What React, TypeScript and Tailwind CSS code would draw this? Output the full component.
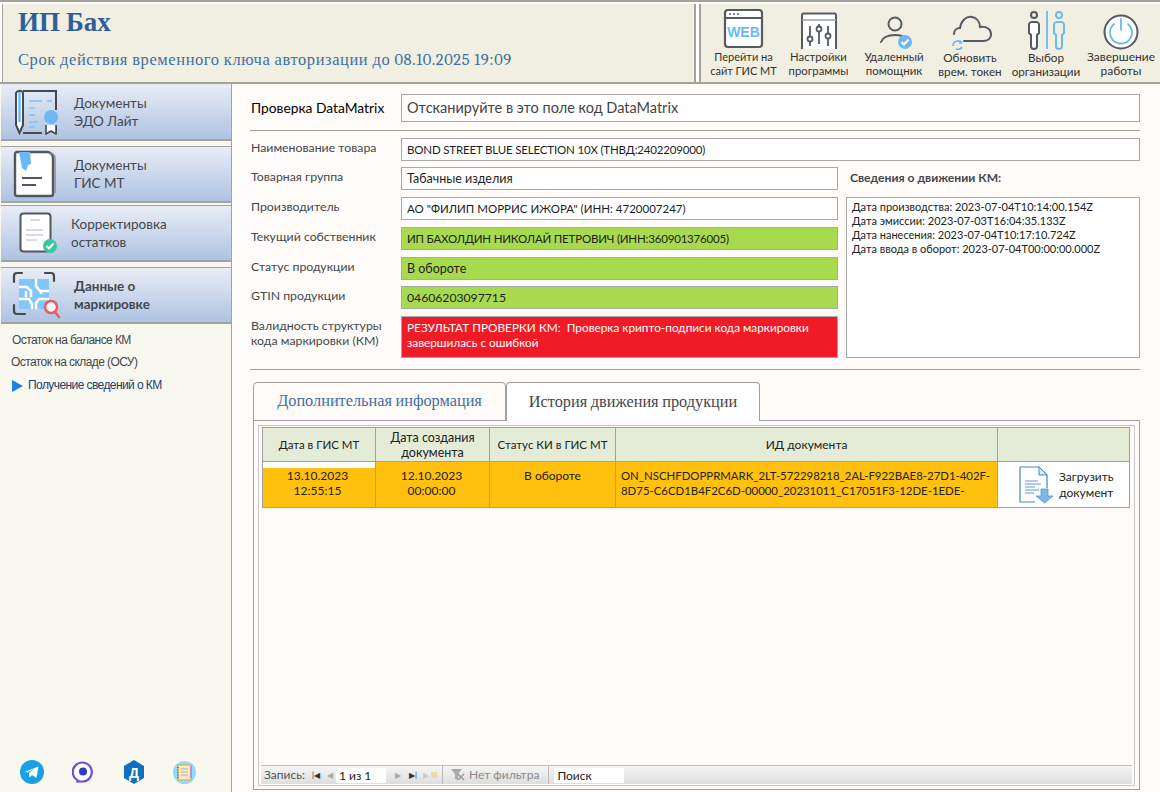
import type { ReactNode } from "react";

const serif = "font-['Cambria','Liberation_Serif',serif]";

function WebIcon() {
  return (
    <svg width="42" height="42" viewBox="0 0 42 42" fill="none">
      <rect x="2" y="2" width="37" height="37" rx="3" stroke="#555b63" strokeWidth="2.2" fill="#fff" />
      <path d="M2 10h37" stroke="#555b63" strokeWidth="2" />
      <path d="M6 6h2M10 6h2M14 6h2" stroke="#555b63" strokeWidth="1.5" />
      <text x="20.5" y="29" textAnchor="middle" fontFamily="Liberation Sans" fontWeight="700" fontSize="14" fill="#6cb8f6">WEB</text>
    </svg>
  );
}

function SlidersIcon() {
  return (
    <svg width="38" height="38" viewBox="0 0 38 38" fill="none" stroke="#555b63">
      <path d="M2 37V3a1.5 1.5 0 0 1 1.500-1.500h31A1.500 1.500 0 0 1 36 3v34" strokeWidth="2" fill="#fff" />
      <path d="M2 8h34" strokeWidth="1.500" stroke="#9aa0a6" />
      <path d="M10 14v20M19 12v20M28 14v20" strokeWidth="1.800" />
      <circle cx="10" cy="27" r="2.500" fill="#fff" strokeWidth="1.800" />
      <circle cx="19" cy="17" r="2.500" fill="#fff" strokeWidth="1.800" />
      <circle cx="28" cy="24" r="2.500" fill="#fff" strokeWidth="1.800" />
    </svg>
  );
}

function HelperIcon() {
  return (
    <svg className="ml-[6px]" width="36" height="34" viewBox="0 0 36 34" fill="none">
      <circle cx="16" cy="8" r="6.500" stroke="#555b63" strokeWidth="2" />
      <path d="M2 26c2-5 7-7 14-7 3 0 5 .4 7 1" stroke="#555b63" strokeWidth="2" strokeLinecap="round" />
      <circle cx="26" cy="26" r="7" fill="#6cb8f6" />
      <path d="M22.500 26l2.500 2.500 4.500-5" stroke="#fff" strokeWidth="2" />
    </svg>
  );
}

function CloudIcon() {
  return (
    <svg className="ml-[3px]" width="42" height="36" viewBox="0 0 42 36" fill="none">
      <path d="M3 20c0-4 3-6 6-6 1-7 6-12 12-11 5 1 8 5 8 10 6-1 11 2 11 7s-4 7-8 7H13" stroke="#555b63" strokeWidth="2" strokeLinecap="round" />
      <path d="M2 32a5 5 0 0 1 9-3M11 33a5 5 0 0 1-6 2" stroke="#6cb8f6" strokeWidth="1.600" />
      <path d="M9 26l3 3-4 1z" fill="#6cb8f6" />
    </svg>
  );
}

function OrgIcon() {
  return (
    <svg width="42" height="40" viewBox="0 0 42 40" fill="none">
      <circle cx="9" cy="5" r="3" stroke="#555b63" strokeWidth="2" />
      <path d="M4 14a3 3 0 0 1 3-2h4a3 3 0 0 1 3 2v9l-2 2v11a3 3 0 0 1-6 0V25l-2-2z" stroke="#555b63" strokeWidth="2" fill="#fff" />
      <path d="M22 1v38" stroke="#6cb8f6" strokeWidth="1.800" />
      <circle cx="34" cy="5" r="3" stroke="#6cb8f6" strokeWidth="2" />
      <path d="M29 14a3 3 0 0 1 3-2h4a3 3 0 0 1 3 2v9l-2 2v11a3 3 0 0 1-6 0V25l-2-2z" stroke="#6cb8f6" strokeWidth="2" />
    </svg>
  );
}

function PowerIcon() {
  return (
    <svg width="36" height="36" viewBox="0 0 36 36" fill="none">
      <circle cx="18" cy="18" r="16.500" stroke="#555b63" strokeWidth="2" fill="#fff" />
      <path d="M11 10a11 11 0 1 0 14 0" stroke="#6cb8f6" strokeWidth="1.800" strokeLinecap="round" />
      <path d="M18 5v11" stroke="#6cb8f6" strokeWidth="1.800" strokeLinecap="round" />
    </svg>
  );
}

function EdoIcon() {
  return (
    <svg width="46" height="46" viewBox="0 0 46 46" fill="none">
      <path d="M10 2h33v19M43 37v6h-2M10 44h19" stroke="#44494f" strokeWidth="2" />
      <path d="M3 4a3 3 0 0 1 3-2 3 3 0 0 1 4 2v32l-3.500 8L3 36z" stroke="#44494f" strokeWidth="2" fill="#fff" />
      <path d="M6.500 3v30" stroke="#6cb8f6" strokeWidth="2.500" />
      <path d="M16 12h13M34 12h5M16 19h6M16 26h6M16 33h9M16 38h6" stroke="#7cc4fb" strokeWidth="1.600" />
      <circle cx="38" cy="28" r="7" fill="#6cb8f6" />
      <path d="M33 36v9l5-3 5 3v-9" stroke="#44494f" strokeWidth="1.600" fill="#fff" />
    </svg>
  );
}

function GisIcon() {
  return (
    <svg width="44" height="48" viewBox="0 0 44 48" fill="none">
      <path d="M2 4a2 2 0 0 1 2-2h30a6 6 0 0 1 6 6v36a2 2 0 0 1-2 2H4a2 2 0 0 1-2-2z" stroke="#52575e" strokeWidth="2.400" fill="#fff" />
      <path d="M37 3a5 5 0 0 1 5 5v35" stroke="#8b9096" strokeWidth="1.500" />
      <path d="M6 2h11l1 12-3 1-2 6-4-3z" fill="#6cb8f6" />
      <path d="M9 28h20M9 35h14" stroke="#52575e" strokeWidth="2" />
    </svg>
  );
}

function StockIcon() {
  return (
    <svg width="40" height="42" viewBox="0 0 40 42" fill="none">
      <rect x="1.500" y="1.500" width="30" height="38" rx="3" stroke="#52575e" strokeWidth="2" fill="#fff" />
      <path d="M11 8h10M7 18h17M7 23h17M7 28h11" stroke="#d6dbe2" strokeWidth="2" />
      <circle cx="31" cy="34" r="7" fill="#37c7a0" />
      <path d="M27.500 34l2.500 2.500 4.500-5" stroke="#fff" strokeWidth="2" />
    </svg>
  );
}

function MarkIcon() {
  return (
    <svg width="50" height="48" viewBox="0 0 50 48" fill="none">
      <path d="M3 11V5a3 3 0 0 1 3-3h5M34 2h6a3 3 0 0 1 3 3v5M3 34v6a3 3 0 0 0 3 3h8" stroke="#44494f" strokeWidth="2.200" strokeLinecap="round" />
      <rect x="8" y="8" width="30" height="30" fill="#84c6fb" />
      <path d="M8 16h8l4 4v6M38 20h-9l-4-5V8M8 28h10l3 5v5M38 28H28l-3 4v6M15 20v6M30 20v3" stroke="#fff" strokeWidth="2.500" />
      <circle cx="40" cy="36" r="6" fill="#fff" stroke="#f0595a" strokeWidth="2.500" />
      <path d="M44 41l4 5" stroke="#f0595a" strokeWidth="2.500" strokeLinecap="round" />
    </svg>
  );
}

function LoadDocIcon() {
  return (
    <svg width="36" height="38" viewBox="0 0 36 38" fill="none">
      <path d="M2 1h19l8 8v13M17 36H2V1" stroke="#3d88cf" strokeWidth="1.200" fill="#fff" />
      <path d="M21 1v8h8z" fill="#d8e9f8" stroke="#3d88cf" strokeWidth="1" />
      <path d="M7 15h13M7 18h16M7 21h10M7 24h14M7 27h9" stroke="#5a9ad6" strokeWidth="1" />
      <path d="M23 23h7v7h5l-8.500 7L18 30h5z" fill="#7db6ea" stroke="#5a9ad6" strokeWidth=".8" />
    </svg>
  );
}

function ToolButton({ icon, lines, w, size }: { icon: ReactNode; lines: string[]; w: string; size?: string }) {
  return (
    <div className={`flex h-full shrink-0 flex-col items-center ${w}`}>
      <div className="flex h-[42px] items-end justify-center">{icon}</div>
      <div className={`text-center leading-[14px] text-[#333] ${size ?? "text-[11px]"}`}>
        {lines.map((l) => (
          <div key={l} className="whitespace-nowrap">{l}</div>
        ))}
      </div>
    </div>
  );
}

function NavButton({ icon, lines, bold, iconBox, mt }: { icon: ReactNode; lines: string[]; bold?: boolean; iconBox: string; mt: string }) {
  return (
    <div className={`flex h-[57px] shrink-0 items-center border-b-2 border-[#a3a39c] bg-gradient-to-b from-[#e9edf6] to-[#aec3e2] ${mt}`}>
      <div className={`flex shrink-0 justify-center ${iconBox}`}>{icon}</div>
      <div className={`text-[13.500px] leading-[18px] text-[#44474d] ${bold ? "font-bold" : ""}`}>
        {lines.map((l) => (
          <div key={l} className="whitespace-nowrap">{l}</div>
        ))}
      </div>
    </div>
  );
}

function Field({ label, value, wide, tone, h, fit }: { label: ReactNode; value: ReactNode; wide?: boolean; tone?: "green" | "red"; h?: string; fit?: string }) {
  const toneClass = tone === "green" ? "bg-[#a8da4f] text-[#1d1d1d]" : tone === "red" ? "bg-[#ef1b26] text-white" : "bg-white text-[#1d1d1d]";
  return (
    <div className="flex items-start">
      <div className="w-[151px] shrink-0 pl-[1px] pt-[2px] text-[12.300px] leading-[15px] text-[#44474d]">{label}</div>
      <div className={`${wide ? "w-[739px]" : "w-[437px]"} ${h ?? "h-[23px]"} whitespace-nowrap border border-[#a9a9a9] px-[5px] py-[3px] leading-[15px] ${fit ?? "text-[12.500px]"} ${toneClass}`}>
        {value}
      </div>
    </div>
  );
}

function Cell({ children, className }: { children: ReactNode; className?: string }) {
  return <div className={`flex justify-center border-r border-[#a0a0a0] text-center ${className ?? ""}`}>{children}</div>;
}

export default function App() {
  return (
    <div className="flex h-[792px] w-[1160px] flex-col overflow-hidden bg-[#fffbf8] font-['Lato','Noto_Sans',sans-serif]">
      {/* Top band */}
      <header className="flex h-[84px] shrink-0 border-y-2 border-t-[#a3a39c] border-b-[#a3a39c] bg-white pt-[2px]">
        <div className={`ml-[2px] w-[694px] border-l border-r-2 border-[#a3a39c] bg-[#f1efe2] pl-[15px] pt-[3px] ${serif}`}>
          <div className="text-[27px] font-bold leading-[32px] text-[#2f5f9b]">ИП Бах</div>
          <div className="mt-[11px] text-[16.500px] leading-[20px] tracking-[0.58px] text-[#3f6fa3]">
            Срок действия временного ключа авторизации до 08.10.2025 19:09
          </div>
        </div>
        <div className="ml-[3px] flex flex-1 border-l-2 border-[#a3a39c] bg-[#f1efe2] pl-[5px] pt-[4px]">
          <ToolButton icon={<WebIcon />} lines={["Перейти на", "сайт ГИС МТ"]} w="w-[75px]" />
          <ToolButton icon={<SlidersIcon />} lines={["Настройки", "программы"]} w="w-[75px]" size="text-[11.300px]" />
          <ToolButton icon={<HelperIcon />} lines={["Удаленный", "помощник"]} w="w-[76px]" size="text-[11.500px]" />
          <ToolButton icon={<CloudIcon />} lines={["Обновить", "врем. токен"]} w="w-[76px]" size="text-[11.700px]" />
          <ToolButton icon={<OrgIcon />} lines={["Выбор", "организации"]} w="w-[76px]" size="text-[11.700px]" />
          <ToolButton icon={<PowerIcon />} lines={["Завершение", "работы"]} w="w-[74px]" size="text-[12px]" />
        </div>
      </header>

      <div className="flex min-h-0 flex-1">
        {/* Sidebar */}
        <aside className="flex w-[232px] shrink-0 flex-col border-r border-[#a3a39c] bg-[#f8f7f0] pl-[1px]">
          <NavButton icon={<EdoIcon />} lines={["Документы", "ЭДО Лайт"]} iconBox="w-[73px] pr-[4px]" mt="mt-0" />
          <NavButton icon={<GisIcon />} lines={["Документы", "ГИС МТ"]} iconBox="w-[73px] pr-[5px]" mt="mt-[5px] border-t border-t-[#a3a39c]" />
          <NavButton icon={<StockIcon />} lines={["Корректировка", "остатков"]} iconBox="w-[70px] pl-[5px]" mt="mt-[2px] border-t border-t-[#a3a39c]" />
          <NavButton icon={<MarkIcon />} lines={["Данные о", "маркировке"]} iconBox="w-[73px] pr-[3px]" bold mt="mt-[5px] border-t border-t-[#a3a39c]" />
          <div className="mt-[9px] font-['Liberation_Sans',sans-serif] text-[12px] leading-[15px] tracking-[-0.58px] text-[#45474c]">
            <div className="pl-[11px]">Остаток на балансе КМ</div>
            <div className="mt-[7px] pl-[10px]">Остаток на складе (ОСУ)</div>
            <div className="mt-[8px] flex items-center pl-[11px] text-[#20406f]">
              <span className="mr-[5px] h-0 w-0 border-y-[6px] border-l-[11px] border-y-transparent border-l-[#1a82dc]" />
              Получение сведений о КМ
            </div>
          </div>
          <div className="mt-auto mb-[8px] flex items-center pl-[19px]">
            <svg width="24" height="24" viewBox="0 0 24 24">
              <circle cx="12" cy="12" r="12" fill="#18a0e4" />
              <path d="M4.500 12L18.500 6.500 16.500 18l-4.500-3-2.500 2.500-.5-4.500 6-4.500-7.500 4z" fill="#fff" />
            </svg>
            <svg className="ml-[28px]" width="22" height="22" viewBox="0 0 22 22">
              <path d="M6 19.500A9.500 9.500 0 1 1 11 20.500H5.500z" fill="#fff" stroke="#6a4fd8" strokeWidth="2.200" />
              <circle cx="11" cy="10.500" r="4" fill="#2d3fc0" />
            </svg>
            <svg className="ml-[30px]" width="20" height="24" viewBox="0 0 20 24">
              <path d="M10 0l10 6v12l-10 6L0 18V6z" fill="#0f70c0" />
              <text x="10" y="17.500" textAnchor="middle" fontFamily="Liberation Sans" fontWeight="700" fontSize="14" fill="#fff">Д</text>
            </svg>
            <svg className="ml-[29px]" width="23" height="23" viewBox="0 0 23 23">
              <circle cx="11.500" cy="11.500" r="11.500" fill="#8edcf5" />
              <rect x="5" y="4" width="13" height="15" fill="#fbe9c2" stroke="#e5a040" />
              <path d="M8 8h7M8 11h7M8 14h7" stroke="#9bb" strokeWidth="1" />
              <path d="M5 6v12" stroke="#667" strokeWidth="1.500" strokeDasharray="1 1.500" />
              <path d="M18 5v12" stroke="#c27ad8" strokeWidth="1.500" />
            </svg>
          </div>
        </aside>

        {/* Main form */}
        <main className="flex min-w-0 flex-1 flex-col pl-[18px] pr-[20px]">
          <div className="mt-[10px] flex items-center">
            <div className="w-[151px] shrink-0 pl-[1px] text-[13.800px] text-black">Проверка DataMatrix</div>
            <div className="flex h-[28px] flex-1 items-center border border-[#a9a9a9] bg-white px-[5px] text-[14.500px] text-[#444]">
              Отсканируйте в это поле код DataMatrix
            </div>
          </div>
          <hr className="mt-[8px] border-[#a3a39c]" />

          <div className="mt-[7px]">
            <Field label="Наименование товара" value="BOND STREET BLUE SELECTION 10X (ТНВД:2402209000)" wide fit="text-[11.500px] tracking-[-0.17px]" />
            <div className="mt-[6px] flex">
              <div className="flex w-[588px] shrink-0 flex-col gap-[7px]">
                <Field label="Товарная группа" value="Табачные изделия" />
                <Field label="Производитель" value='АО "ФИЛИП МОРРИС ИЖОРА" (ИНН: 4720007247)' fit="text-[11.500px]" />
                <Field label="Текущий собственник" value="ИП БАХОЛДИН НИКОЛАЙ ПЕТРОВИЧ (ИНН:360901376005)" tone="green" fit="text-[11.500px] tracking-[-0.19px]" />
                <Field label="Статус продукции" value="В обороте" tone="green" />
                <div className="-mt-[1px]">
                  <Field label="GTIN продукции" value="04606203097715" tone="green" fit="text-[12.200px]" />
                </div>
                <Field
                  label={<>Валидность структуры<br />кода маркировки (КМ)</>}
                  value={<>РЕЗУЛЬТАТ ПРОВЕРКИ КМ:&nbsp; Проверка крипто-подписи кода маркировки<br />завершилась с ошибкой</>}
                  tone="red"
                  h="h-[42px]"
                  fit="text-[11.800px]"
                />
              </div>
              <div className="ml-[8px] flex flex-1 flex-col">
                <div className="pl-[4px] pt-[3px] text-[12.100px] font-bold leading-[15px] text-[#44474d]">Сведения о движении КМ:</div>
                <div className="mt-[12px] flex-1 border border-[#a9a9a9] bg-white px-[5px] pt-[2px] text-[11px] leading-[14px] text-[#222]">
                  <div>Дата производства: 2023-07-04T10:14:00.154Z</div>
                  <div>Дата эмиссии: 2023-07-03T16:04:35.133Z</div>
                  <div>Дата нанесения: 2023-07-04T10:17:10.724Z</div>
                  <div>Дата ввода в оборот: 2023-07-04T00:00:00.000Z</div>
                </div>
              </div>
            </div>
          </div>
          <hr className="mt-[11px] border-[#a3a39c]" />

          {/* Tabs */}
          <div className={`relative z-10 ml-[3px] mt-[12px] flex h-[39px] shrink-0 text-[16.300px] ${serif}`}>
            <div className="flex w-[253px] items-center justify-center rounded-t-[4px] border border-[#a0a0a0] text-[#3f6fa3]">
              Дополнительная информация
            </div>
            <div className="flex w-[254px] items-center justify-center rounded-t-[4px] border border-b-0 border-[#a0a0a0] bg-white text-[#44474d]">
              История движения продукции
            </div>
          </div>
          <div className="-mt-px ml-[3px] mb-[2px] flex min-h-0 flex-1 flex-col border border-[#a0a0a0] p-[4px] pb-[3px]">
            <div className="flex min-h-0 flex-1 flex-col border border-[#c8c8c8] bg-[#fffbf8] px-[3px] pt-[1px]">
              <div className="grid h-[35px] w-[868px] shrink-0 grid-cols-[113px_114px_126px_382px_1fr] items-stretch border border-[#a0a0a0] bg-[#e4ecd7] text-[12.500px] leading-[15px] text-[#222]">
                <Cell className="items-center text-[11.500px]">Дата в ГИС МТ</Cell>
                <Cell className="items-center">Дата создания<br />документа</Cell>
                <Cell className="items-center text-[11.500px]">Статус КИ в ГИС МТ</Cell>
                <Cell className="items-center text-[12px]">ИД документа</Cell>
                <div />
              </div>
              <div className="grid h-[46px] w-[868px] shrink-0 grid-cols-[113px_114px_126px_382px_1fr] items-stretch border-x border-b border-[#a0a0a0] bg-[#ffc10e] text-[12px] leading-[15px] text-[#222]">
                <div className="border-r border-[#a0a0a0] pr-[3px] pt-[6px] text-center shadow-[inset_0_6px_0_#fff]">
                  <div>13.10.2023<br />12:55:15</div>
                </div>
                <Cell className="pr-[2px] pt-[6px]">12.10.2023<br />00:00:00</Cell>
                <Cell className="pt-[6px]">В обороте</Cell>
                <div className="border-r border-[#a0a0a0] px-[5px] pt-[6px] text-[11.400px] whitespace-nowrap">
                  ON_NSCHFDOPPRMARK_2LT-572298218_2AL-F922BAE8-27D1-402F-<br />8D75-C6CD1B4F2C6D-00000_20231011_C17051F3-12DE-1EDE-
                </div>
                <div className="flex items-center bg-white pl-[20px]">
                  <LoadDocIcon />
                  <div className="ml-[5px] text-center text-[12px] leading-[16px] text-[#222]">Загрузить<br />документ</div>
                </div>
              </div>
              <div className="flex-1" />
              {/* Record navigator */}
              <div className="mb-[1px] -mx-[1px] flex h-[19px] shrink-0 items-center border-t border-[#c0c0c0] bg-gradient-to-b from-[#f5f5f5] to-[#dedede] text-[12px] text-[#555]">
                <span className="ml-[3px]">Запись:</span>
                <span className="ml-[7px] text-[8px] text-[#333]">|◀</span>
                <span className="ml-[7px] text-[8px] text-[#aaa]">◀</span>
                <span className="ml-[3px] h-[15px] w-[50px] bg-white pl-[3px] text-[12px] leading-[15px] text-[#222]">1 из 1</span>
                <span className="ml-[9px] text-[8px] text-[#aaa]">▶</span>
                <span className="ml-[8px] text-[8px] text-[#333]">▶|</span>
                <span className="ml-[6px] text-[8px] text-[#ccc]">▶</span>
                <span className="ml-[2px] h-[6px] w-[6px] bg-[#ecdca0]" />
                <span className="ml-[5px] h-full border-l border-[#bbb]" />
                <svg className="ml-[7px]" width="16" height="14" viewBox="0 0 16 14">
                  <path d="M1 1h11L8 6v6L5 11V6z" fill="#aaa" />
                  <path d="M8 6l6 6M14 6l-6 6" stroke="#999" strokeWidth="1.500" />
                </svg>
                <span className="ml-[3px] text-[#8a8a8a]">Нет фильтра</span>
                <span className="ml-[9px] h-full border-l border-[#bbb]" />
                <span className="ml-[5px] h-[15px] w-[70px] bg-white pl-[3px] text-[12px] leading-[15px] text-[#222]">Поиск</span>
              </div>
            </div>
          </div>
        </main>
      </div>
    </div>
  );
}
